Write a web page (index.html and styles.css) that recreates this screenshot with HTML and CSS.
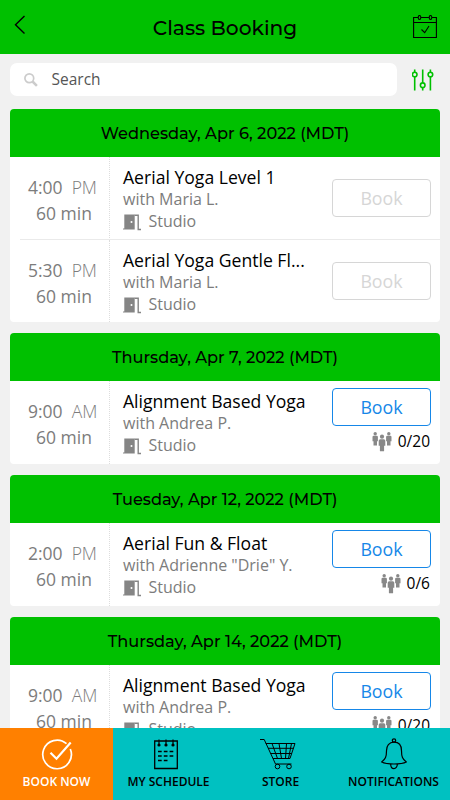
FILE: index.html
```html
<!DOCTYPE html>
<html lang="en">
<head>
<meta charset="utf-8">
<title>Class Booking</title>
<link rel="stylesheet" href="styles.css">
</head>
<body>
<svg class="defs" width="0" height="0">
  <symbol id="door" viewBox="0 0 18 17"><path d="M1.300 .5h10.400v15H0v-1h1.300z" fill="#858585"/><path d="M11.500 1.200h3.700v14.300H18" fill="none" stroke="#858585" stroke-width="1.400"/><circle cx="8.500" cy="8" r="1" fill="#fff"/></symbol>
  <symbol id="people" viewBox="0 0 20 20"><g fill="#888"><circle cx="3.2" cy="1.8" r="1.7"/><path d="M.5 5q0-1.2 1.2-1.2h3Q5.9 3.8 5.9 5v4.2H5V13.500H1.500V9.200H.5z"/><circle cx="16.800" cy="1.800" r="1.700"/><path d="M14.100 5q0-1.200 1.200-1.200h3q1.200 0 1.200 1.200v4.200h-1v4.300H15V9.200h-.9z"/><circle cx="10" cy="4.700" r="2.100"/><path d="M6.700 8.700q0-1.500 1.500-1.500h3.600q1.500 0 1.500 1.500v5h-1.200v5.600H7.900v-5.600H6.700z"/></g></symbol>
</svg>
<div class="app">
  <header class="topbar">
    <svg class="back" width="12" height="20" viewBox="0 0 12 20"><path d="M10.500 1 1.500 9.700l9 8.800" fill="none" stroke="#000" stroke-width="1.400"/></svg>
    <h1>Class Booking</h1>
    <svg class="cal" width="24" height="25" viewBox="0 0 24 25"><g fill="none" stroke="#000" stroke-width="1.100"><path d="M5 2.500H.600v20h22.800v-20H19M8 2.500h8M.6 7.500h22.800M8.500 14.500l3.200 3.200L16 11"/><ellipse cx="6.500" cy="2.500" rx="1.300" ry="2"/><ellipse cx="17.500" cy="2.500" rx="1.300" ry="2"/></g></svg>
  </header>
  <div class="tools">
    <div class="search">
      <svg width="14" height="14" viewBox="0 0 14 14"><g fill="none" stroke="#ccc"><circle cx="5.300" cy="5.300" r="4.400" stroke-width="1.700"/><path d="m8.500 8.500 4.400 4.400" stroke-width="2.500"/></g></svg>
      <span>Search</span>
    </div>
    <svg class="filter" width="22" height="22" viewBox="0 0 22 22"><g fill="none" stroke="#00c000" stroke-width="1.600"><path d="M2.700 .5v2.700M2.700 8v13.500M10.700 .5v13.300M10.700 18.700v2.800M18.400 .5v2.700M18.400 8v13.500"/><circle cx="2.700" cy="5.500" r="2.300"/><circle cx="10.700" cy="16.200" r="2.300"/><circle cx="18.400" cy="5.500" r="2.300"/></g></svg>
  </div>
  <main class="list">
    <section class="card">
      <h2>Wednesday, Apr 6, 2022 (MDT)</h2>
      <div class="row">
        <div class="time"><div class="clock"><b>4:00</b><i>PM</i></div><div class="dur">60 min</div></div>
        <div class="info"><div class="name">Aerial Yoga Level 1</div><div class="who">with Maria L.</div><div class="room"><svg width="18" height="17"><use href="#door"/></svg>Studio</div></div>
        <div class="side closed"><div class="book">Book</div></div>
      </div>
      <div class="row divided">
        <div class="time"><div class="clock"><b>5:30</b><i>PM</i></div><div class="dur">60 min</div></div>
        <div class="info"><div class="name">Aerial Yoga Gentle Fl...</div><div class="who">with Maria L.</div><div class="room"><svg width="18" height="17"><use href="#door"/></svg>Studio</div></div>
        <div class="side closed"><div class="book">Book</div></div>
      </div>
    </section>
    <section class="card">
      <h2>Thursday, Apr 7, 2022 (MDT)</h2>
      <div class="row">
        <div class="time"><div class="clock"><b>9:00</b><i>AM</i></div><div class="dur">60 min</div></div>
        <div class="info"><div class="name">Alignment Based Yoga</div><div class="who">with Andrea P.</div><div class="room"><svg width="18" height="17"><use href="#door"/></svg>Studio</div></div>
        <div class="side"><div class="book">Book</div><div class="count"><svg width="20" height="20"><use href="#people"/></svg>0/20</div></div>
      </div>
    </section>
    <section class="card">
      <h2>Tuesday, Apr 12, 2022 (MDT)</h2>
      <div class="row">
        <div class="time"><div class="clock"><b>2:00</b><i>PM</i></div><div class="dur">60 min</div></div>
        <div class="info"><div class="name">Aerial Fun &amp; Float</div><div class="who">with Adrienne "Drie" Y.</div><div class="room"><svg width="18" height="17"><use href="#door"/></svg>Studio</div></div>
        <div class="side"><div class="book">Book</div><div class="count"><svg width="20" height="20"><use href="#people"/></svg>0/6</div></div>
      </div>
    </section>
    <section class="card">
      <h2>Thursday, Apr 14, 2022 (MDT)</h2>
      <div class="row">
        <div class="time"><div class="clock"><b>9:00</b><i>AM</i></div><div class="dur">60 min</div></div>
        <div class="info"><div class="name">Alignment Based Yoga</div><div class="who">with Andrea P.</div><div class="room"><svg width="18" height="17"><use href="#door"/></svg>Studio</div></div>
        <div class="side"><div class="book">Book</div><div class="count"><svg width="20" height="20"><use href="#people"/></svg>0/20</div></div>
      </div>
    </section>
  </main>
  <nav class="tabs">
    <div class="tab active"><svg width="32" height="32" viewBox="0 0 32 32"><g fill="none" stroke="#fff"><path d="M25.500 5.700A14.300 14.300 0 1 0 29.300 11" stroke-width="1.700"/><path d="m9.500 14.700 6 6L29.700 4.500" stroke-width="2.200"/></g></svg><span>BOOK NOW</span></div>
    <div class="tab"><svg class="pad" width="24" height="32" viewBox="0 0 24 32"><path d="M.7 3h22.600v27.500H.7z" fill="none" stroke="#000" stroke-width="1.300"/><path d="M5 1.500v5M12 1.500v5M19 1.500v5" stroke="#000" stroke-width="1.200"/><g><circle cx="5" cy="7" r="1.600"/><circle cx="12" cy="7" r="1.600"/><circle cx="19" cy="7" r="1.600"/></g><path d="M4 13.500h15.500M4 18h15.500M4 22.500h10" stroke="#000" stroke-width="1.500" stroke-dasharray="3.700 2.100"/></svg><span>MY SCHEDULE</span></div>
    <div class="tab"><svg class="cart" width="38" height="32" viewBox="0 0 38 32"><g fill="none" stroke="#000" stroke-width="1"><path d="M1 1.500h4.200L16.500 26h16M6.800 5.500H36L31 20.500H14M9 10.300h25.500M11.500 15.500h21.200M13 5.500 18.500 20.500M20 5.500l2.500 15M27.500 5.500l-1 15M32.500 5.500l-3 15"/><circle cx="18.500" cy="28.500" r="2.300"/><circle cx="30" cy="28.500" r="2.300"/></g></svg><span>STORE</span></div>
    <div class="tab bell"><svg width="26" height="32" viewBox="0 0 26 32"><g fill="none" stroke="#000" stroke-width="1.200"><circle cx="13" cy="2.500" r="1.700"/><path d="M13 4.200c-5 0-7.500 3.600-7.500 8.500 0 6-1 8.300-4.800 11.300 3.200 1.700 7.600 2 12.300 2s9.100-.3 12.300-2c-3.800-3-4.800-5.300-4.800-11.300 0-4.900-2.500-8.500-7.500-8.500zM9.700 26.200c0 5.800 6.600 5.800 6.600 0"/></g></svg><span>NOTIFICATIONS</span></div>
  </nav>
</div>
</body>
</html>
```
FILE: styles.css
```css
* { box-sizing: border-box; }
body { margin: 0; font-family: "Open Sans", "Noto Sans", sans-serif; background: #f1f1f1; }
.defs { position: absolute; }
.app { width: 450px; height: 800px; display: flex; flex-direction: column; overflow: hidden; }
.topbar { height: 54px; flex: none; background: #00c000; display: flex; justify-content: space-between; padding: 15px 13px 0 14px; }
.topbar h1 { margin: 0; font: 500 20.200px/26px Montserrat, Lato, sans-serif; white-space: nowrap; padding-left: 11px; }
.tools { height: 55px; flex: none; display: flex; padding: 9px 15px 0 10px; gap: 15px; }
.search { width: 387px; height: 33px; border-radius: 7px; background: #fff; display: flex; align-items: center; gap: 13.500px; padding-left: 14px; font-size: 15.500px; color: #555; }
.search span { position: relative; top: -1px; }
.filter { margin-top: 6px; flex: none; }
.list { flex: 1; min-height: 0; overflow: hidden; padding: 0 10px; display: flex; flex-direction: column; gap: 11px; }
.card { flex: none; width: 430px; background: #fff; border-radius: 4px; overflow: hidden; }
.card h2 { margin: 0; height: 48px; background: #00c000; font: 500 16.200px/48px Montserrat, Inter, sans-serif; text-align: center; white-space: nowrap; }
.row { height: 83px; display: flex; position: relative; }
.row.divided { height: 81.700px; }
.divided::before { content: ""; position: absolute; left: 10px; right: 0; top: -1px; height: 1px; background: #eaeaea; }
.time { width: 100px; border-right: 1px dotted #ddd; color: #7c7c7c; font-size: 17.500px; line-height: 26px; padding-top: 17px; white-space: nowrap; font-weight: 300; }
.clock { display: flex; gap: 9px; padding-left: 18px; }
.clock b { font-weight: 400; }
.clock i { font-style: normal; }
.dur { padding-left: 26px; font-weight: 400; }
.info { width: 222px; padding: 9px 0 0 13px; white-space: nowrap; color: #7c7c7c; font-size: 16px; line-height: 22px; }
.name { font-size: 17.600px; color: #000; }
.room { display: flex; gap: 8px; }
.room svg { margin: 4px 0 0 -.5px; }
.side { width: 99px; padding-top: 7px; }
.closed { padding-top: 22px; }
.book { height: 38px; border: 1px solid #1687e8; border-radius: 4px; color: #1687e8; font-size: 17.800px; line-height: 37px; text-align: center; }
.closed .book { border-color: #d6d6d6; color: #d6d6d6; }
.count { display: flex; justify-content: flex-end; gap: 6px; margin-top: 4.500px; padding-right: 1px; font-size: 15.500px; line-height: 22px; }
.count svg { margin-top: 2px; }
.tabs { height: 72px; flex: none; display: grid; grid-template-columns: 113px 111px 113px 113px; background: #00c1c1; }
.tab { display: flex; flex-direction: column; align-items: center; padding-top: 10px; font-size: 12px; font-weight: 600; line-height: 17px; gap: 2.500px; white-space: nowrap; }
.active { background: #ff8000; color: #fff; }
.pad { margin-left: -6px; }
.cart { margin-left: -6px; }
```
